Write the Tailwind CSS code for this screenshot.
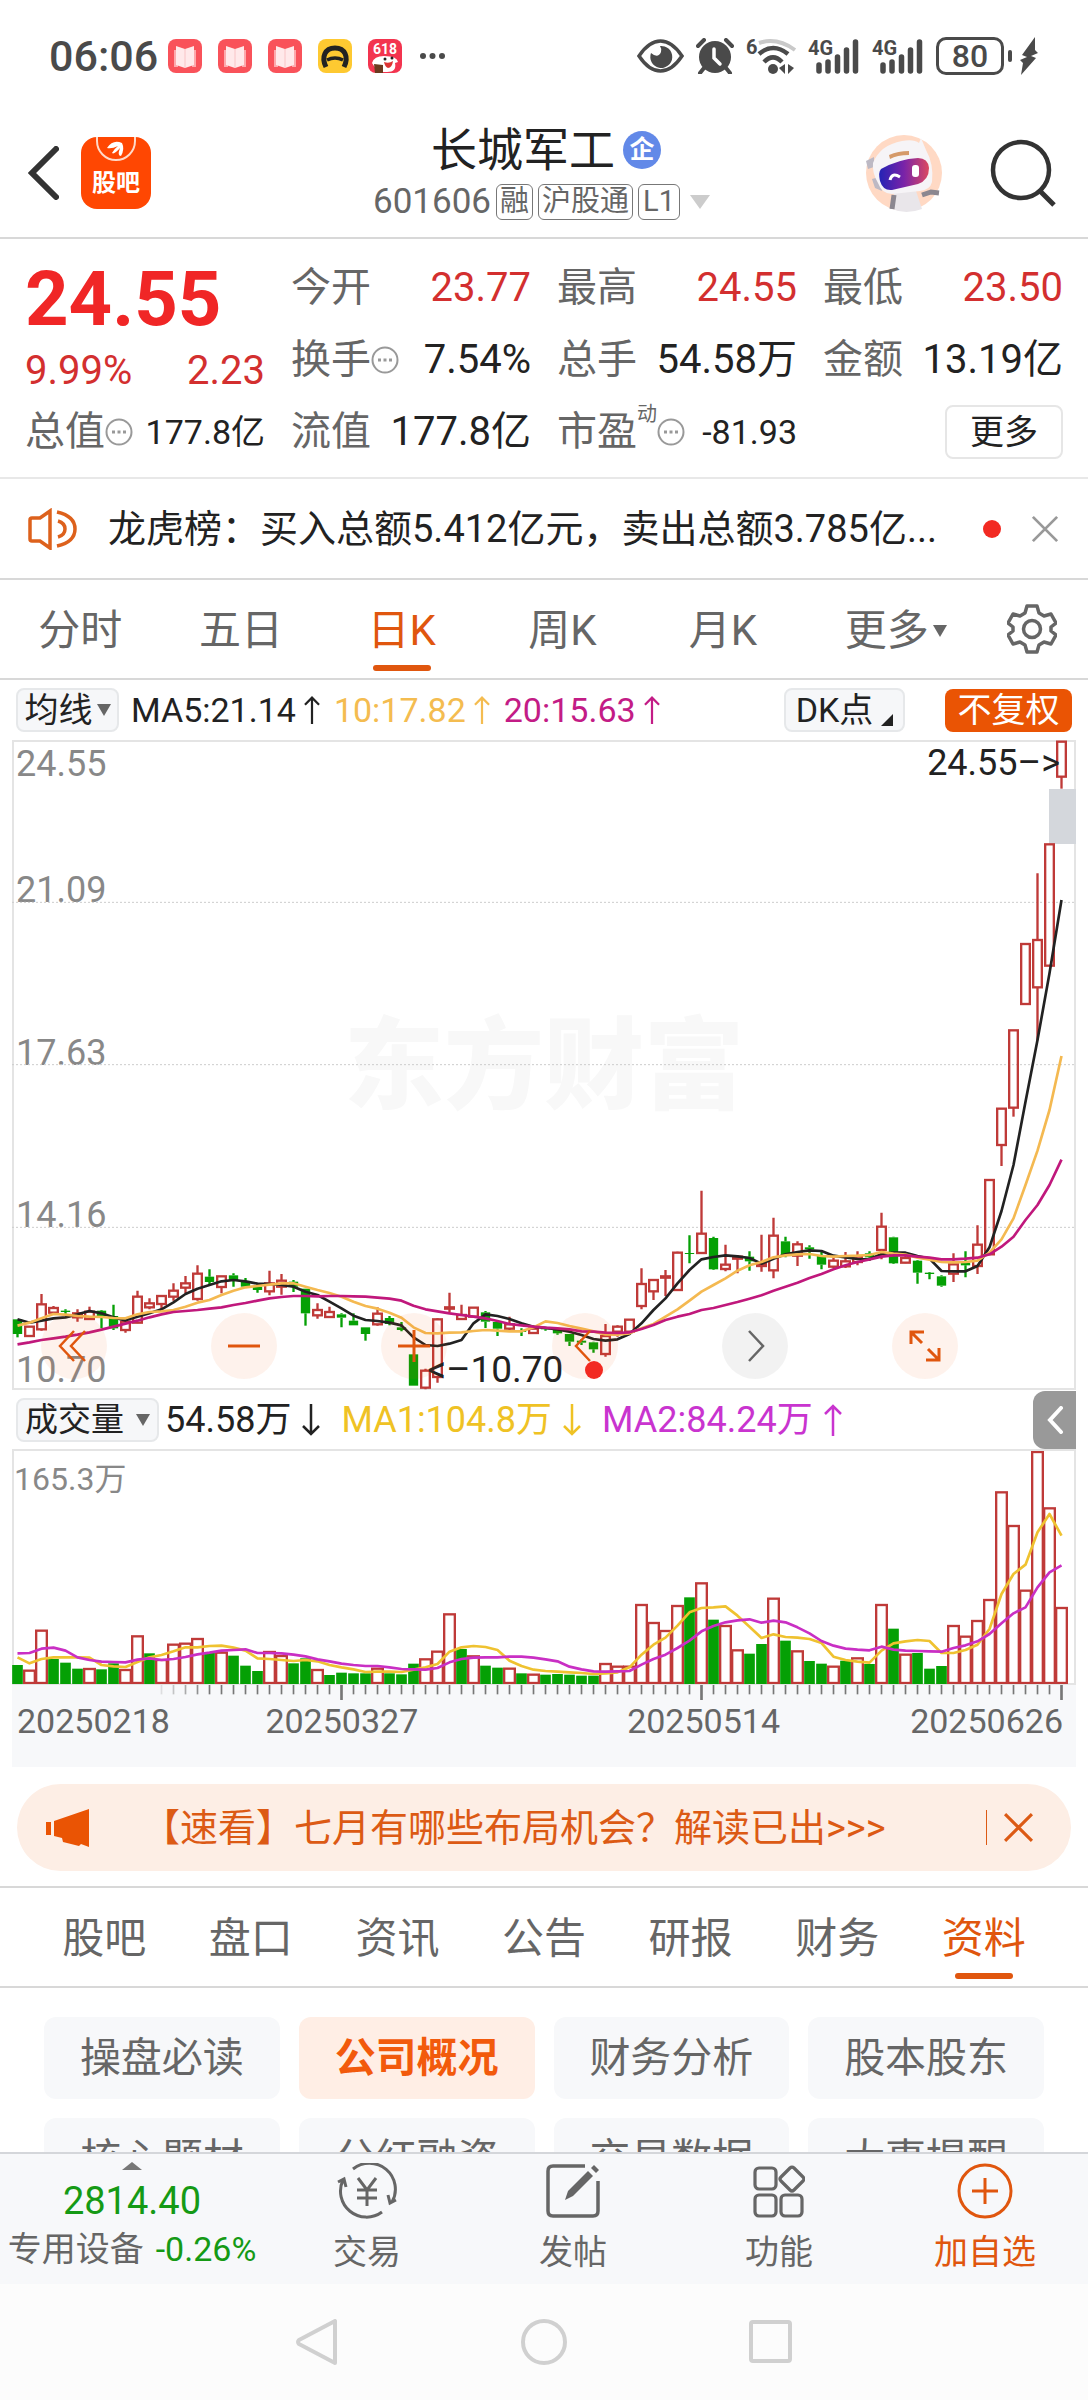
<!DOCTYPE html>
<html lang="zh-CN">
<head>
    <meta charset="UTF-8">
    <meta name="viewport" content="width=device-width, initial-scale=1.0">
    <title>长城军工 601606</title>
    <script src="https://cdn.jsdelivr.net/npm/@tailwindcss/browser@4"></script>
</head>
<body class="h-screen flex flex-col overflow-hidden bg-white text-[#222] leading-none font-['Roboto','Noto_Sans_CJK_SC',sans-serif]">
    <!-- Shared arrow shapes -->
    <svg class="hidden">
        <symbol id="up" viewBox="0 0 20 34"><path d="M10 33V3M2 11l8-8 8 8" fill="none" stroke="currentColor" stroke-width="2.5"/></symbol>
        <symbol id="down" viewBox="0 0 20 34"><path d="M10 1v30M2 23l8 8 8-8" fill="none" stroke="currentColor" stroke-width="2.5"/></symbol>
        <symbol id="cross" viewBox="0 0 30 30"><path d="M2 2l26 26M28 2L2 28" fill="none" stroke="currentColor" stroke-width="3"/></symbol>
        <symbol id="more" viewBox="0 0 28 28"><circle cx="14" cy="14" r="12.5" fill="none" stroke="currentColor" stroke-width="2"/><path d="M7 12.500h3v3H7zM12.500 12.500h3v3h-3zM18 12.500h3v3h-3z" fill="currentColor"/></symbol>
        <symbol id="book" viewBox="0 0 34 34"><rect width="34" height="34" rx="8" fill="#f9525a"/><path d="M6 11h4v17H6zM24 11h4v17h-4z" fill="#fda9ac"/><path d="M8 7l9 3 9-3v19l-9 3-9-3z" fill="#ffe9ea"/><path d="M17 10v19" stroke="#f9c4c6"/></symbol>
        <symbol id="signal" viewBox="0 0 52 38">
            <path d="M11 28v6M20 25v9M29.500 20v14M38.500 13v21M47.500 5v29" stroke="currentColor" stroke-width="5.500" stroke-linecap="round"/>
        </symbol>
    </svg>

    <!-- Status bar -->
    <div class="shrink-0 h-[112px] pl-[49px] pr-[50px] flex items-center justify-between text-[#4a4a4a]">
        <div class="flex items-center">
            <span class="text-[43px] font-medium w-[119px]">06:06</span>
            <div class="flex items-center gap-4">
                <svg class="size-[34px]"><use href="#book"/></svg>
                <svg class="size-[34px]"><use href="#book"/></svg>
                <svg class="size-[34px]"><use href="#book"/></svg>
                <svg class="size-[34px]" viewBox="0 0 34 34"><rect width="34" height="34" rx="8" fill="#fec931"/><path d="M8 28C3 18 7 9 17 9s14 9 9 19" fill="none" stroke="#222" stroke-width="5"/><path d="M9 21q8-4 16 0" fill="none" stroke="#222" stroke-width="3.500"/></svg>
                <svg class="size-[34px]" viewBox="0 0 34 34"><rect width="34" height="34" rx="8" fill="#f3344f"/><text x="17" y="15" text-anchor="middle" font-size="14" font-weight="700" fill="#fff">618</text><path d="M4 24q2-7 12-7 13 0 14 6l-3 1q2 9-8 9H10z" fill="#fff"/><circle cx="17" cy="20" r="1.500" fill="#222"/><circle cx="24" cy="19" r="1.500" fill="#222"/><path d="M16 23q5 2 9-1-1 7-5 7-3-1-4-6z" fill="#d33"/><path d="M6 25l9 1v8H7z" fill="#6b3a1f"/></svg>
                <svg class="w-[28px] h-[8px]" viewBox="0 0 28 8" fill="currentColor"><circle cx="5" cy="4" r="3"/><circle cx="14.500" cy="4" r="3"/><circle cx="24" cy="4" r="3"/></svg>
            </div>
        </div>
        <div class="flex items-center gap-3">
            <svg class="w-[47px] h-[34px]" viewBox="0 0 47 34" fill="none" stroke="currentColor" stroke-width="3.500"><path d="M2 17Q12 2 23.500 2T45 17Q35 32 23.500 32T2 17z"/><path d="M23 7a11 11 0 1 1-9 7q7 6 10-1 1-3-1-6z" fill="currentColor" stroke="none"/></svg>
            <svg class="w-[38px] h-[36px]" viewBox="0 0 38 36"><circle cx="19" cy="19" r="16" fill="currentColor"/><path d="M2 8l6-6M36 8l-6-6M8 30l-4 5M30 30l4 5" stroke="currentColor" stroke-width="4" stroke-linecap="round"/><path d="M18 11v9l6 6" fill="none" stroke="#fff" stroke-width="3.500" stroke-linecap="round"/></svg>
            <svg class="w-[50px] h-[38px] overflow-visible" viewBox="0 0 50 38" fill="none" stroke-width="4"><text x="0" y="17" font-size="20" font-weight="700" fill="currentColor">6</text><path d="M13 6q18-6 36 7" stroke="#c9c9c9"/><path d="M13 17q14-12 29 0" stroke="currentColor" stroke-width="4.500"/><path d="M18 25q9-9 18 0" stroke="currentColor" stroke-width="4.500"/><circle cx="27" cy="32" r="5" fill="currentColor"/><path d="M33 31l6-4v10zM42 27v10l6-6z" fill="currentColor"/></svg>
            <svg class="w-[52px] h-[38px] overflow-visible"><text x="0" y="18" font-size="20" font-weight="700" fill="currentColor">4G</text><use href="#signal"/></svg>
            <svg class="w-[52px] h-[38px] overflow-visible"><text x="0" y="18" font-size="20" font-weight="700" fill="currentColor">4G</text><use href="#signal"/></svg>
            <div class="flex items-center gap-[4px]">
                <span class="w-[68px] h-[38px] rounded-[10px] border-3 border-current flex items-center justify-center text-[32px] font-medium">80</span>
                <span class="w-1 h-3 rounded bg-current"></span>
                <svg class="ml-1 w-[18px] h-[38px]" viewBox="0 0 18 38"><path d="M15 0L2 18l5 2-7 3 3 3-2 12 15-17-5-2 7-3-3-3z" fill="currentColor"/></svg>
            </div>
        </div>
    </div>

    <!-- Title bar -->
    <header class="shrink-0 h-[127px] pl-[28px] pr-[32px] pb-[3px] grid grid-cols-[1fr_auto_1fr] items-center border-b-2 border-[#d8d8d8]">
        <div class="flex items-center gap-[22px]">
            <button aria-label="返回"><svg class="w-[31px] h-[54px]" viewBox="0 0 31 54"><path d="M28 3L4 27l24 24" fill="none" stroke="#333" stroke-width="6" stroke-linecap="round"/></svg></button>
            <button class="w-[70px] h-[72px] rounded-2xl bg-[#ff4702] text-white text-[24px] font-bold flex flex-col items-center" aria-label="股吧">
                <svg class="w-[42px] h-[26px] mb-2" viewBox="0 0 42 26" fill="none" stroke="#ffd9c8" stroke-width="2"><path d="M2 0v4a19 19 0 0 0 38 0V0"/><path d="M12 11q6-9 15-5 3 6-1 13-4 0-1-8-6 7-8 5 2-4 6-7-6 3-11 2z" fill="#fff" stroke="none"/></svg>
                股吧
            </button>
        </div>
        <div class="flex flex-col items-center gap-[11px]">
            <h1 class="text-[46px] flex items-center gap-2 pl-2">长城军工
                <span class="size-[38px] rounded-full bg-[#6289e8] text-white text-[25px] font-bold flex items-center justify-center">企</span>
            </h1>
            <button class="flex items-center gap-[5px] text-[35px] text-[#666]">601606
                <span class="h-[36px] px-[3px] text-[29px] border border-[#777] rounded-md flex items-center">融</span>
                <span class="h-[36px] px-[3px] text-[29px] border border-[#777] rounded-md flex items-center">沪股通</span>
                <span class="h-[36px] px-[4px] text-[29px] border border-[#777] rounded-md flex items-center">L1</span>
                <svg class="ml-1 w-[22px] h-[14px]" viewBox="0 0 22 14"><path d="M1 0h20L11 14z" fill="#ccc"/></svg>
            </button>
        </div>
        <div class="flex items-center justify-end gap-[46px]">
            <button aria-label="智能助手"><svg class="w-[80px] h-[80px]" viewBox="0 0 80 80">
                <defs><linearGradient id="visor"><stop offset="0" stop-color="#2423b5"/><stop offset=".5" stop-color="#7a23a8"/><stop offset="1" stop-color="#dc4860"/></linearGradient></defs>
                <circle cx="40" cy="40" r="38" fill="#ffd9c4"/>
                <path d="M30 60l22-2 6 18q-16 6-30 0z" fill="#e9e6ea"/>
                <path d="M30 62l-2 14M58 62l9-3 8 1" stroke="#8b8790" stroke-width="5" fill="none"/>
                <path d="M2 28l8-4v10l-6 2zM8 46l7-2 3 14-7-3z" fill="#bdb9c4"/>
                <path d="M9 30Q16 12 38 8q12-2 17 2l2-5 5 12q8 14 6 32-2 8-12 9l-28 3Q18 61 14 50 8 40 9 30z" fill="#f6f4f7"/>
                <path d="M17 36q18-10 37-11 10 0 11 10 0 12-11 16l-26 6q-9 1-12-9-2-9 1-12z" fill="url(#visor)"/>
                <path d="M26 47q2-8 10-3" stroke="#fff" stroke-width="3" fill="none"/><rect x="48" y="32" width="7" height="12" rx="3" fill="#fff"/>
                <path d="M25 22q9-4 20-4v4q-12 0-19 4z" fill="#d59a6a"/>
            </svg></button>
            <button aria-label="搜索"><svg class="w-[66px] h-[70px]" viewBox="0 0 66 70" fill="none" stroke="#333"><circle cx="31" cy="32" r="28" stroke-width="4.500"/><path d="M50 53l14 14" stroke-width="5"/></svg></button>
        </div>
    </header>

    <main class="flex-1 min-h-0 overflow-hidden">
        <!-- Quote -->
        <section class="h-[240px] px-[25px] pt-[13px] grid grid-cols-4 gap-x-[26px] border-b-2 border-[#e8e8e8] text-[40px]">
            <div class="text-[#d32f2f]">
                <div class="h-[94px] flex items-center text-[76px] font-bold text-[#f02626]">24.55</div>
                <div class="h-[50px] flex items-center justify-between"><span>9.99%</span><span>2.23</span></div>
                <div class="h-[72px] flex items-center justify-between"><span class="text-[#666] flex items-center">总值<svg class="size-7 text-[#999]"><use href="#more"/></svg></span><span class="text-[34px] text-[#222]">177.8亿</span></div>
            </div>
            <div>
                <div class="h-[72px] flex items-center justify-between"><span class="text-[#666]">今开</span><span class="text-[#d32f2f]">23.77</span></div>
                <div class="h-[72px] flex items-center justify-between"><span class="text-[#666] flex items-center">换手<svg class="size-7 text-[#999]"><use href="#more"/></svg></span><span>7.54%</span></div>
                <div class="h-[72px] flex items-center justify-between"><span class="text-[#666]">流值</span><span>177.8亿</span></div>
            </div>
            <div>
                <div class="h-[72px] flex items-center justify-between"><span class="text-[#666]">最高</span><span class="text-[#d32f2f]">24.55</span></div>
                <div class="h-[72px] flex items-center justify-between"><span class="text-[#666]">总手</span><span>54.58万</span></div>
                <div class="h-[72px] flex items-center justify-between"><span class="text-[#666] flex items-center">市盈<span class="self-start text-[20px] -mt-2">动</span><svg class="size-7 text-[#999]"><use href="#more"/></svg></span><span class="text-[34px]">-81.93</span></div>
            </div>
            <div>
                <div class="h-[72px] flex items-center justify-between"><span class="text-[#666]">最低</span><span class="text-[#d32f2f]">23.50</span></div>
                <div class="h-[72px] flex items-center justify-between"><span class="text-[#666]">金额</span><span>13.19亿</span></div>
                <div class="h-[72px] flex items-center justify-end"><button class="w-[118px] h-[54px] border-2 border-[#e6e6e6] rounded-lg text-[34px]">更多</button></div>
            </div>
        </section>

        <!-- News line -->
        <section class="h-[101px] pl-[28px] pr-[29px] flex items-center border-b-2 border-[#d8d8d8]">
            <svg class="w-[50px] h-[42px] shrink-0" viewBox="0 0 50 42" fill="none" stroke="#dd611c" stroke-width="3.500"><path d="M2 12q0-2 2-2h8l10-7v37l-10-7H4q-2 0-2-2z"/><path d="M29 4q18 4 18 17T29 38M30 13q7 2 7 8t-7 8"/></svg>
            <a href="#" class="ml-[30px] flex-1 truncate leading-[50px] text-[38px]">龙虎榜：买入总额5.412亿元，卖出总额3.785亿...</a>
            <span class="size-[18px] rounded-full bg-[#f22a22]"></span>
            <button class="ml-[30px] text-[#999]" aria-label="关闭"><svg class="size-[28px]"><use href="#cross" width="28" height="28"/></svg></button>
        </section>

        <!-- Period tabs -->
        <nav class="h-[100px] flex border-b-2 border-[#d8d8d8] text-[42px] text-[#666]">
            <button class="flex-1 pt-1">分时</button>
            <button class="flex-1 pt-1">五日</button>
            <button class="flex-1 pt-1 relative text-[#e0560e]">日K<span class="absolute bottom-[7px] left-1/2 -translate-x-1/2 w-[58px] h-[6px] rounded-full bg-[#e0560e]"></span></button>
            <button class="flex-1 pt-1">周K</button>
            <button class="flex-1 pt-1">月K</button>
            <button class="flex-1 pt-1 flex items-center justify-center gap-1 pl-3">更多<svg class="w-[14px] h-[12px]" viewBox="0 0 14 12"><path d="M0 0h14L7 12z" fill="#666"/></svg></button>
            <button class="w-[112px] flex items-center justify-center" aria-label="设置"><svg class="w-[50px] h-[50px]" viewBox="0 0 50 50" fill="none" stroke="#666" stroke-width="3.500" stroke-linejoin="round"><path d="M20 2h10l2 7 5 3 7-2 5 9-5 4v4l5 4-5 9-7-2-5 3-2 7H20l-2-7-5-3-7 2-5-9 5-4v-4l-5-4 5-9 7 2 5-3z"/><circle cx="25" cy="25" r="8.500"/></svg></button>
        </nav>

        <!-- Moving averages -->
        <div class="h-[60px] pl-4 pr-4 flex items-center text-[34px]">
            <button class="w-[103px] h-[44px] border-2 border-[#e6e8ea] bg-[#f6f7f9] rounded-lg flex items-center justify-center gap-1">均线<svg class="w-[14px] h-[12px]" viewBox="0 0 14 12"><path d="M0 0h14L7 12z" fill="#666"/></svg></button>
            <span class="ml-3 flex items-center gap-[6px]">MA5:21.14<svg class="w-[20px] h-[30px]"><use href="#up"/></svg></span>
            <span class="ml-3 flex items-center gap-[6px] text-[#f4bc50]">10:17.82<svg class="w-[20px] h-[30px]"><use href="#up"/></svg></span>
            <span class="ml-3 flex items-center gap-[6px] text-[#c31c86]">20:15.63<svg class="w-[20px] h-[30px]"><use href="#up"/></svg></span>
            <button class="ml-auto w-[121px] h-[44px] border-2 border-[#e6e8ea] bg-[#f6f7f9] rounded-lg flex items-center justify-center gap-2">DK点<svg class="self-end mb-1 w-[12px] h-[12px]" viewBox="0 0 12 12"><path d="M12 0v12H0z" fill="#222"/></svg></button>
            <button class="ml-10 w-[127px] h-[43px] bg-[#ea5404] rounded-lg text-white">不复权</button>
        </div>

        <!-- Candles -->
        <div class="relative mx-3 h-[650px] border-2 border-[#e4e4e4] text-[36px] text-[#888]">
            <span class="absolute inset-x-0 top-[275px] text-center text-[100px] font-black text-[#f8f8f8]">东方财富</span>
            <span class="absolute left-[2px] top-[4px]">24.55</span>
            <span class="absolute left-[2px] top-[130px]">21.09</span>
            <span class="absolute left-[2px] top-[293px]">17.63</span>
            <span class="absolute left-[2px] top-[455px]">14.16</span>
            <span class="absolute left-[2px] bottom-0">10.70</span>
            <svg id="price" class="absolute -inset-[2px] w-[calc(100%+4px)] h-[650px]" viewBox="0 -1200 3192 1950" preserveAspectRatio="none"></svg>
            <span class="absolute right-[14px] top-[3px] text-[#222]">24.55–&gt;</span>
            <span class="absolute left-[39%] bottom-0 text-[37px] text-[#222]">&lt;–10.70</span>
            <div class="absolute left-[27px] right-[116px] bottom-[9px] flex justify-between text-[#e0560e]">
                <button class="size-[66px] rounded-full bg-[#f25a0c]/8 flex items-center justify-center" aria-label="最左"><svg class="size-[34px]" viewBox="0 0 34 34" fill="none" stroke="currentColor" stroke-width="2.500"><path d="M17 2L3 17l14 15M28 2L14 17l14 15"/></svg></button>
                <button class="size-[66px] rounded-full bg-[#f25a0c]/8 flex items-center justify-center" aria-label="缩小"><svg class="size-[34px]" viewBox="0 0 34 34" stroke="currentColor" stroke-width="3"><path d="M1 17h32"/></svg></button>
                <button class="size-[66px] rounded-full bg-[#f25a0c]/8 flex items-center justify-center" aria-label="放大"><svg class="size-[34px]" viewBox="0 0 34 34" stroke="currentColor" stroke-width="3"><path d="M1 17h32M17 1v32"/></svg></button>
                <button class="relative size-[66px] rounded-full bg-[#f25a0c]/8 flex items-center justify-center" aria-label="左移"><svg class="size-[34px]" viewBox="0 0 34 34" fill="none" stroke="currentColor" stroke-width="2.500"><path d="M22 2L8 17l14 15"/></svg><span class="absolute right-[15px] bottom-0 size-[18px] rounded-full bg-[#f22a22]"></span></button>
                <button class="size-[66px] rounded-full bg-black/5 text-[#666] flex items-center justify-center" aria-label="右移"><svg class="size-[34px]" viewBox="0 0 34 34" fill="none" stroke="currentColor" stroke-width="2.500"><path d="M11 2l14 15-14 15"/></svg></button>
                <button class="size-[66px] rounded-full bg-[#f25a0c]/8 flex items-center justify-center" aria-label="全屏"><svg class="size-[34px]" viewBox="0 0 34 34" fill="none" stroke="currentColor" stroke-width="3"><path d="M3 15V3h13M3 3l11 11M31 19v12H18M31 31L20 20"/></svg></button>
            </div>
        </div>

        <!-- Volume -->
        <div class="mx-3 h-[59px] pl-1 flex items-center text-[36px]">
            <button class="w-[143px] h-[44px] border-2 border-[#e6e8ea] bg-[#f6f7f9] rounded-lg text-[33px] flex items-center justify-center gap-3">成交量<svg class="w-[14px] h-[12px]" viewBox="0 0 14 12"><path d="M0 0h14L7 12z" fill="#666"/></svg></button>
            <span class="ml-[6px] flex items-center gap-[10px]">54.58万<svg class="w-[20px] h-[34px]"><use href="#down"/></svg></span>
            <span class="ml-5 flex items-center gap-[10px] text-[#efc224]">MA1:104.8万<svg class="w-[20px] h-[34px]"><use href="#down"/></svg></span>
            <span class="ml-5 flex items-center gap-[10px] text-[#c934cf]">MA2:84.24万<svg class="w-[20px] h-[34px]"><use href="#up"/></svg></span>
            <button class="ml-auto w-[43px] h-[58px] rounded-l-xl bg-[#999] flex items-center justify-center" aria-label="展开"><svg class="w-[18px] h-[28px]" viewBox="0 0 18 28"><path d="M15 2L4 14l11 12" fill="none" stroke="#fff" stroke-width="4" stroke-linecap="round"/></svg></button>
        </div>
        <div class="relative mx-3 h-[236px] border-2 border-[#e4e4e4]">
            <span class="absolute left-0 top-[12px] text-[32px] text-[#888]">165.3万</span>
            <svg id="volume" class="absolute -inset-x-[2px] top-0 w-[calc(100%+4px)] h-[233px]" viewBox="0 151 3192 699" preserveAspectRatio="none"></svg>
        </div>
        <div class="relative mx-3 h-[82px] bg-[#f7f8fa] text-[34px] text-[#666]">
            <svg id="ticks" class="absolute inset-0 w-full h-[15px]" viewBox="0 0 3192 45" preserveAspectRatio="none"></svg>
            <span class="absolute left-[5px] top-[19px]">20250218</span>
            <span class="absolute left-[31%] -translate-x-1/2 top-[19px]">20250327</span>
            <span class="absolute left-[65%] -translate-x-1/2 top-[19px]">20250514</span>
            <span class="absolute right-[13px] top-[19px]">20250626</span>
        </div>

        <!-- Promo -->
        <div class="mx-[17px] mt-[17px] h-[87px] rounded-full bg-[#fdeee5] pl-[29px] pr-[37px] flex items-center text-[#dc5a14]">
            <svg class="w-[44px] h-[40px]" viewBox="0 0 44 40" fill="#ea5404"><path d="M0 14h5v13H0zM8 13l35-12v38l-8-3-2 2-16-4-1-4-8-2z"/></svg>
            <a href="#" class="flex-1 ml-[52px] text-[38px]">【速看】七月有哪些布局机会？解读已出&gt;&gt;&gt;</a>
            <span class="w-px h-[35px] bg-[#dc5a14]"></span>
            <button class="ml-4" aria-label="关闭"><svg class="size-[31px]"><use href="#cross" width="31" height="31"/></svg></button>
        </div>

        <!-- Detail tabs -->
        <nav class="mt-[15px] h-[102px] px-[31px] flex border-y-2 border-[#d8d8d8] text-[42px] text-[#666]">
            <button class="flex-1 pt-1">股吧</button>
            <button class="flex-1 pt-1">盘口</button>
            <button class="flex-1 pt-1">资讯</button>
            <button class="flex-1 pt-1">公告</button>
            <button class="flex-1 pt-1">研报</button>
            <button class="flex-1 pt-1">财务</button>
            <button class="flex-1 pt-1 relative text-[#e0560e]">资料<span class="absolute bottom-[7px] left-1/2 -translate-x-1/2 w-[58px] h-[6px] rounded-full bg-[#e0560e]"></span></button>
        </nav>
        <div class="px-[44px] pt-[29px] grid grid-cols-4 gap-x-[19px] gap-y-[19px] text-[41px] text-[#666]">
            <button class="h-[82px] rounded-xl bg-[#f7f8fa]">操盘必读</button>
            <button class="h-[82px] rounded-xl bg-[#ffeee5] text-[#f25a0c] font-bold">公司概况</button>
            <button class="h-[82px] rounded-xl bg-[#f7f8fa]">财务分析</button>
            <button class="h-[82px] rounded-xl bg-[#f7f8fa]">股本股东</button>
            <button class="h-[82px] rounded-xl bg-[#f7f8fa]">核心题材</button>
            <button class="h-[82px] rounded-xl bg-[#f7f8fa]">分红融资</button>
            <button class="h-[82px] rounded-xl bg-[#f7f8fa]">交易数据</button>
            <button class="h-[82px] rounded-xl bg-[#f7f8fa]">大事提醒</button>
        </div>
    </main>

    <!-- Action bar -->
    <footer class="shrink-0 h-[132px] flex border-t-2 border-[#d4d6da] bg-[#f7f8fa] text-[34px] text-[#666]">
        <button class="w-[264px] flex flex-col items-center pt-2">
            <svg class="w-[20px] h-[8px]" viewBox="0 0 20 8"><path d="M0 8h20L10 0z" fill="#777"/></svg>
            <span class="mt-3 text-[38px] text-[#159a15]">2814.40</span>
            <span class="mt-3 flex gap-3 whitespace-nowrap">专用设备<span class="text-[#159a15]">-0.26%</span></span>
        </button>
        <button class="flex-1 flex flex-col items-center pt-[9px] gap-4">
            <svg class="w-[62px] h-[56px] shrink-0" viewBox="0 0 62 56" fill="none" stroke="currentColor" stroke-width="3"><path d="M46 49a26 26 0 0 1-39-32M2 19l6-3 2 8M17 6a26 26 0 0 1 39 33M60 37l-6 3-2-8"/><path d="M22 15l9 12 9-12M31 27v16M21 27h20M21 35h20"/></svg>
            交易
        </button>
        <button class="flex-1 flex flex-col items-center pt-[9px] gap-4">
            <svg class="w-[56px] h-[56px] shrink-0" viewBox="0 0 56 56" fill="none" stroke="currentColor" stroke-width="3.500"><path d="M40 3H8Q3 3 3 8v40q0 5 5 5h40q5 0 5-5V18"/><path d="M20 37l3-9L43 8l5 5-20 20z" fill="currentColor" stroke="none"/><path d="M46 5l3-3 5 5-3 3z" fill="currentColor" stroke="none"/></svg>
            发帖
        </button>
        <button class="flex-1 flex flex-col items-center pt-[9px] gap-4">
            <svg class="w-[52px] h-[56px] shrink-0" viewBox="0 0 52 56" fill="none" stroke="currentColor" stroke-width="3.200"><rect x="2" y="5" width="21" height="21" rx="4"/><rect x="2" y="32" width="21" height="21" rx="4"/><rect x="28" y="32" width="21" height="21" rx="4"/><path d="M37 5q2-2 4 0l9 9q2 2 0 4l-9 9q-2 2-4 0l-9-9q-2-2 0-4z"/></svg>
            功能
        </button>
        <button class="flex-1 flex flex-col items-center pt-[9px] gap-4 text-[#e0560e]">
            <svg class="w-[56px] h-[56px] shrink-0" viewBox="0 0 56 56" fill="none" stroke="currentColor" stroke-width="3"><circle cx="28" cy="28" r="26"/><path d="M28 15v26M15 28h26"/></svg>
            加自选
        </button>
    </footer>

    <!-- System navigation -->
    <div class="shrink-0 h-[116px] bg-[#fcfcfc] flex items-center justify-center gap-[180px]">
        <button aria-label="后退"><svg class="size-[46px]" viewBox="0 0 46 46"><path d="M40 2v42L4 25q-2-2 0-4z" fill="none" stroke="#d0d0d0" stroke-width="4" stroke-linejoin="round"/></svg></button>
        <button aria-label="主页"><svg class="size-[46px]" viewBox="0 0 46 46"><circle cx="23" cy="23" r="21" fill="none" stroke="#d0d0d0" stroke-width="4"/></svg></button>
        <button aria-label="任务"><svg class="size-[46px]" viewBox="0 0 46 46"><rect x="4" y="3" width="39" height="39" rx="2" fill="none" stroke="#d0d0d0" stroke-width="4"/></svg></button>
    </div>

    <script>
        const RED = '#bf3a38', GREEN = '#05a005';
        const STEP = 36;
        const x = i => 16.5 + i * STEP;

        // r/g, body top, body bottom, high, low
        const candles = `g 538 582 538 592|r 560 588 560 588|r 493 568 462 572|r 504 518 498 525|g 512 516 508 524|r 520 532 508 545|r 515 537 500 537|g 512 528 510 565
g 528 565 494 570|r 545 570 540 578|r 470 548 452 550|r 490 502 475 508|r 468 492 468 510|r 452 470 430 482|r 430 443 408 460|r 401 477 376 482
g 410 426 388 432|r 409 441 409 460|g 406 420 400 440|g 424 440 414 442|g 440 450 430 458|r 430 454 392 466|r 422 440 402 464|g 425 440 420 456
g 446 520 446 557|r 510 526 490 536|r 516 531 500 534|g 523 533 520 562|g 542 556 520 556|g 562 582 562 602|r 521 553 502 557|g 534 552 528 556
g 562 570 546 574|g 643 737 643 737|r 692 743 686 748|r 538 711 535 728|r 502 506 458 518|r 525 537 494 540|r 503 530 503 530|g 517 545 513 564
g 546 566 540 588|r 553 566 530 570|g 572 576 565 588|r 566 579 558 579|g 562 568 560 572|g 570 580 565 584|g 582 605 582 618|g 602 608 598 615
g 607 628 605 638|r 588 642 552 650|r 560 575 556 590|r 539 575 539 578|r 432 498 385 508|r 420 454 418 480|r 409 413 390 468|r 338 450 335 450
g 339 342 286 370|r 281 339 152 340|g 294 388 290 390|r 374 387 314 394|r 350 356 345 400|g 350 364 334 392|r 372 378 284 395|r 287 391 233 415
g 304 348 290 352|r 313 347 304 378|g 322 328 316 356|g 345 374 332 388|r 362 380 350 384|r 364 379 336 384|r 350 366 334 376|g 340 352 334 362
r 260 330 218 358|g 292 370 290 372|r 354 368 345 370|g 362 398 360 431|g 398 402 396 418|g 409 437 406 440|r 373 401 340 426|g 368 376 334 412
r 314 378 256 402|r 120 343 120 343|r -94 15 -94 78|r -329 -97 -329 -70|r -588 -408 -588 -408|r -600 -458 -800 -299|r -887 -523 -887 -523|r -1195 -1090 -1195 -1054`
            .split(/[|\n]/).map(row => {
                const [c, ...v] = row.trim().split(' ');
                return [c, ...v.map(Number)];
            });

        const ma5 = [538,548,542,535,532,523,513,520,532,541,530,520,508,487,462,446,435,424,420,424,431,432,435,440,455,465,485,505,527,540,543,548,556,592,615,618,611,600,550,523,528,537,550,560,564,568,575,585,597,602,598,582,550,510,475,430,390,358,351,346,349,354,371,356,343,336,331,333,347,352,357,358,342,338,338,348,356,393,394,394,378,322,213,75,-115,-300,-500,-720];
        const ma10 = [557,548,535,522,524,528,530,531,534,535,523,516,514,510,500,488,480,465,452,442,438,434,430,430,440,450,459,470,485,498,506,518,533,562,579,580,578,577,573,570,572,574,574,562,544,549,558,566,574,583,584,580,565,552,530,508,482,455,435,415,392,376,366,352,346,343,342,348,350,348,347,345,336,341,344,353,359,366,367,366,362,338,298,235,135,32,-90,-252];
        const ma20 = [613,607,600,595,590,584,577,569,560,551,542,532,523,516,513,510,506,502,495,489,482,475,471,468,468,469,468,468,469,470,473,476,482,497,508,514,520,525,530,535,543,552,556,560,563,565,568,574,575,578,579,577,567,555,540,530,522,510,504,495,486,476,466,452,440,428,414,402,388,376,366,358,350,346,346,350,353,358,358,356,353,343,320,290,240,195,135,59];

        const volumes = [793,808,688,775,786,804,803,806,788,806,705,758,776,730,727,713,756,754,765,795,811,752,764,788,773,806,823,816,818,818,802,818,821,789,774,751,639,745,765,795,801,802,818,820,822,820,822,825,825,788,796,796,611,665,689,614,590,546,657,674,747,759,730,592,720,750,781,789,796,780,771,790,611,684,760,757,804,796,674,706,659,596,273,374,568,152,321,620];
        const volumeColors = 'grrgggrggrrgrrrrgrgg' + 'grrggrggggrggg' + 'rrrgrggrgrgggggr' + 'rrrrrrgrgrrggrgrggrgrgrgrgggrrrrrrrrrr';
        const vma1 = [770,788,775,770,770,770,771,793,797,799,784,770,763,752,740,740,736,735,741,750,773,775,778,781,778,782,793,800,806,814,813,813,814,807,800,790,753,740,736,739,748,780,796,807,811,813,815,817,820,818,815,800,762,732,711,675,635,622,620,617,645,678,712,701,709,711,715,727,768,778,783,786,750,728,722,718,721,757,757,748,732,685,580,520,492,395,340,405];
        const vma2 = [758,757,744,741,750,770,778,783,784,785,777,773,778,775,769,761,756,750,748,746,757,757,758,762,767,776,782,789,793,796,796,800,805,806,807,802,785,775,771,770,770,768,768,771,776,782,798,806,812,813,812,811,792,775,762,742,720,692,676,665,659,656,666,660,665,680,698,721,735,744,747,749,738,747,750,751,752,753,742,734,722,700,668,638,620,560,515,494];

        const line = (data, color) =>
            `<polyline points="${data.map((v, i) => x(i) + ',' + v).join(' ')}" fill="none" stroke="${color}" stroke-width="8" stroke-linejoin="round"/>`;

        // Price chart
        let out = '';
        [-713, -226, 262].forEach(y => {
            out += `<path d="M0 ${y}H3192" stroke="#ccc" stroke-width="3" stroke-dasharray="6 6"/>`;
        });
        out += '<rect x="3111" y="-1053" width="81" height="165" fill="#d4d7dc"/>';
        candles.forEach(([c, top, bottom, high, low], i) => {
            const color = c === 'r' ? RED : GREEN;
            out += `<path d="M${x(i)} ${high}V${top}M${x(i)} ${bottom}V${low}" stroke="${color}" stroke-width="7"/>`;
            if (c === 'r') {
                out += `<rect x="${x(i) - 13}" y="${top}" width="26" height="${bottom - top}" fill="none" stroke="${color}" stroke-width="7"/>`;
            } else {
                out += `<rect x="${x(i) - 14}" y="${top}" width="28" height="${bottom - top}" fill="${color}"/>`;
            }
        });
        out += line(ma5, '#222') + line(ma10, '#f4b951') + line(ma20, '#c0187c');
        document.getElementById('price').innerHTML = out;

        // Volume chart
        out = '';
        volumes.forEach((v, i) => {
            if (volumeColors[i] === 'r') {
                out += `<rect x="${x(i) - 16}" y="${v + 2}" width="32" height="${845 - v}" fill="#fff" stroke="${RED}" stroke-width="7"/>`;
            } else {
                out += `<rect x="${x(i) - 16}" y="${v}" width="32" height="${850 - v}" fill="${GREEN}"/>`;
            }
        });
        out += line(vma1, '#efc230') + line(vma2, '#c92fc4');
        document.getElementById('volume').innerHTML = out;

        // Time axis, faded in at the left
        out = '';
        for (let i = 12; i < 88; i++) {
            const major = i === 27 || i === 57 || i === 87;
            out += `<path d="M${x(i)} 0V${major ? 45 : 28}" stroke="#777" stroke-width="${major ? 8 : 5}" opacity="${Math.min(1, (i - 11) / 5)}"/>`;
        }
        document.getElementById('ticks').innerHTML = out;
    </script>
</body>
</html>
